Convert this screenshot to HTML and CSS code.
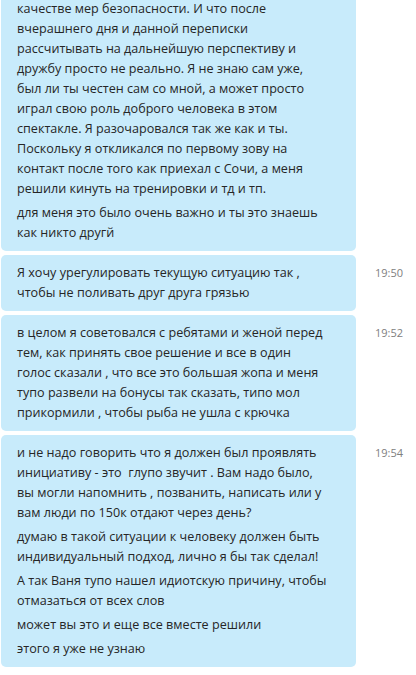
FILE: index.html
```html
<!DOCTYPE html>
<html lang="ru">
<head>
<meta charset="utf-8">
<link rel="stylesheet" href="styles.css">
</head>
<body>
<div class="chat">
  <div class="row">
    <div class="bubble">
      <p>качестве мер безопасности. И что после<br>вчерашнего дня и данной переписки<br>рассчитывать на дальнейшую перспективу и<br>дружбу просто не реально. Я не знаю сам уже,<br>был ли ты честен сам со мной, а может просто<br>играл свою роль доброго человека в этом<br>спектакле. Я разочаровался так же как и ты.<br>Поскольку я откликался по первому зову на<br>контакт после того как приехал с Сочи, а меня<br>решили кинуть на тренировки и тд и тп.</p>
      <p>для меня это было очень важно и ты это знаешь<br>как никто другй</p>
    </div>
    <div class="time"></div>
  </div>
  <div class="row">
    <div class="bubble">
      <p>Я хочу урегулировать текущую ситуацию так ,<br>чтобы не поливать друг друга грязью</p>
    </div>
    <div class="time">19:50</div>
  </div>
  <div class="row">
    <div class="bubble">
      <p>в целом я советовался с ребятами и женой перед<br>тем, как принять свое решение и все в один<br>голос сказали , что все это большая жопа и меня<br>тупо развели на бонусы так сказать, типо мол<br>прикормили , чтобы рыба не ушла с крючка</p>
    </div>
    <div class="time">19:52</div>
  </div>
  <div class="row">
    <div class="bubble">
      <p>и не надо говорить что я должен был проявлять<br>инициативу - это &nbsp;глупо звучит . Вам надо было,<br>вы могли напомнить , позванить, написать или у<br>вам люди по 150к отдают через день?</p>
      <p>думаю в такой ситуации к человеку должен быть<br>индивидуальный подход, лично я бы так сделал!</p>
      <p>А так Ваня тупо нашел идиотскую причину, чтобы<br>отмазаться от всех слов</p>
      <p>может вы это и еще все вместе решили</p>
      <p>этого я уже не узнаю</p>
    </div>
    <div class="time">19:54</div>
  </div>
</div>
</body>
</html>
```

FILE: styles.css
```css
html, body {
  margin: 0;
  padding: 0;
  background: #ffffff;
}

body {
  font-family: "Open Sans", "Noto Sans", sans-serif;
  color: #262626;
  overflow: hidden;
}

.chat {
  display: flex;
  flex-direction: column;
  gap: 4px;
  margin-top: -9px;
  padding-left: 1px;
}

.row {
  display: flex;
  align-items: flex-start;
}

.bubble {
  width: 355px;
  box-sizing: border-box;
  background: #c8ebfb;
  border-radius: 5px;
  padding: 8px 10px 8px 16px;
  display: flex;
  flex-direction: column;
  gap: 4px;
}

.bubble p {
  margin: 0;
  font-size: 12.6px;
  line-height: 20px;
  white-space: nowrap;
}

.time {
  margin-left: 19px;
  padding-top: 8px;
  font-size: 11px;
  line-height: 20px;
  color: #808080;
}
```
